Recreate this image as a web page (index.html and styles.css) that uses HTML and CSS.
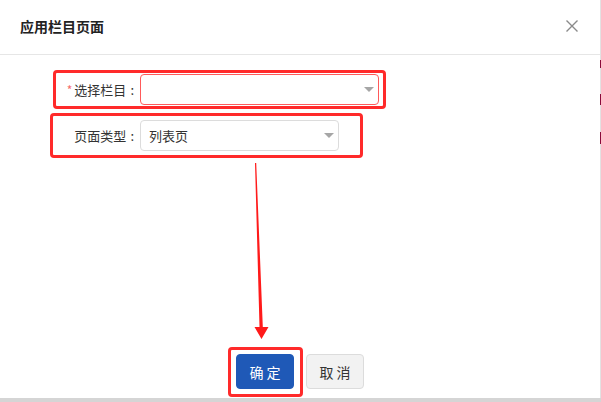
FILE: index.html
```html
<!DOCTYPE html>
<html lang="zh">
<head>
<meta charset="utf-8">
<link rel="stylesheet" href="styles.css">
</head>
<body>
<div class="page">
  <div class="dialog">
    <div class="header">
      <span class="title">应用栏目页面</span>
      <svg class="close" width="14" height="14" viewBox="0 0 14 14"><path d="M1.5 1.5 L12.5 12.5 M12.5 1.5 L1.5 12.5" stroke="#8a8a8a" stroke-width="1.4" fill="none"/></svg>
    </div>
    <div class="body">
      <div class="row row-column">
        <label class="label"><span class="req">*</span>选择栏目<span class="colon">:</span></label>
        <div class="select select-error"><span class="value"></span><span class="caret"></span></div>
      </div>
      <div class="row row-type">
        <label class="label">页面类型<span class="colon">:</span></label>
        <div class="select select-type"><span class="value">列表页</span><span class="caret"></span></div>
      </div>
      <svg class="arrow" width="601" height="360" viewBox="0 0 601 360">
        <polygon points="255,108 256.2,108 262.8,272 268.5,272 261.5,284 254.5,272 259.5,272" fill="#ff1a1a"/>
      </svg>
      <div class="footer">
        <div class="mark">
          <button class="btn btn-primary">确 定</button>
        </div>
        <button class="btn btn-default">取 消</button>
      </div>
    </div>
  </div>
  <div class="edge">
    <span class="edge-mark m1"></span>
    <span class="edge-mark m2"></span>
    <span class="edge-mark m3"></span>
  </div>
</div>
</body>
</html>
```
FILE: styles.css
```css
* { box-sizing: border-box; }
html, body { margin: 0; padding: 0; }
body {
  background: #d5d5d5;
  font-family: "Noto Sans CJK SC", "Noto Sans", sans-serif;
  color: #333;
  width: 601px;
  height: 402px;
  overflow: hidden;
}
.page { display: flex; height: 398px; }
.dialog {
  width: 600px;
  height: 398px;
  background: #fff;
  display: flex;
  flex-direction: column;
}
.edge {
  width: 1px;
  height: 398px;
  background: #e2e2e2;
  display: flex;
  flex-direction: column;
}
.edge-mark { display: block; width: 1px; background: #8a0a3a; }
.m1 { margin-top: 60px; height: 8px; }
.m2 { margin-top: 26px; height: 11px; }
.m3 { margin-top: 27px; height: 12px; }

.header {
  height: 55px;
  border-bottom: 1px solid #e6e6e6;
  display: flex;
  align-items: center;
  justify-content: space-between;
  padding: 0 21px 2px 20px;
  flex-shrink: 0;
}
.title { font-size: 14px; font-weight: bold; color: #222; }
.close { display: block; }

.body {
  flex: 1;
  position: relative;
  display: flex;
  flex-direction: column;
}
.row {
  display: flex;
  align-items: center;
  border: 3px solid #ff2a2a;
  border-radius: 4px;
}
.row-column { margin: 15px 0 0 53px; width: 333px; height: 39px; }
.row-type { margin: 4px 0 0 50px; width: 313px; height: 45px; }
.label {
  font-size: 13px;
  color: #333;
  text-align: right;
  padding-right: 6px;
  white-space: nowrap;
}
.colon { margin-left: 4px; }
.row-column .label { width: 84px; }
.row-type .label { width: 87px; }
.req { color: #f56c6c; margin-right: 2px; font-size: 12px; }
.select {
  height: 31px;
  border: 1px solid #dcdcdc;
  border-radius: 4px;
  display: flex;
  align-items: center;
  justify-content: space-between;
  padding: 0 4px 0 8px;
  font-size: 13px;
  color: #333;
}
.select-error { width: 239px; border-color: #ff5a5a; }
.select-type { width: 199px; }
.caret {
  width: 0;
  height: 0;
  border-left: 5px solid transparent;
  border-right: 5px solid transparent;
  border-top: 5px solid #a6a6a6;
}
.arrow { position: absolute; left: 0; top: 0; pointer-events: none; }

.footer {
  margin-top: auto;
  display: flex;
  align-items: flex-start;
  padding: 0 0 1px 228px;
  gap: 3px;
}
.mark {
  border: 3px solid #ff2a2a;
  border-radius: 4px;
  padding: 4px 6px 5px 5px;
}
.btn {
  width: 58px;
  height: 35px;
  border-radius: 4px;
  font-family: "Noto Sans CJK SC", "Noto Sans", sans-serif;
  font-size: 14px;
  padding: 0;
  cursor: pointer;
}
.btn-primary { background: #1f59b7; border: 1px solid #1f59b7; color: #fff; }
.btn-default { background: #f2f2f2; border: 1px solid #dcdcdc; color: #333; margin-top: 7px; }
```
